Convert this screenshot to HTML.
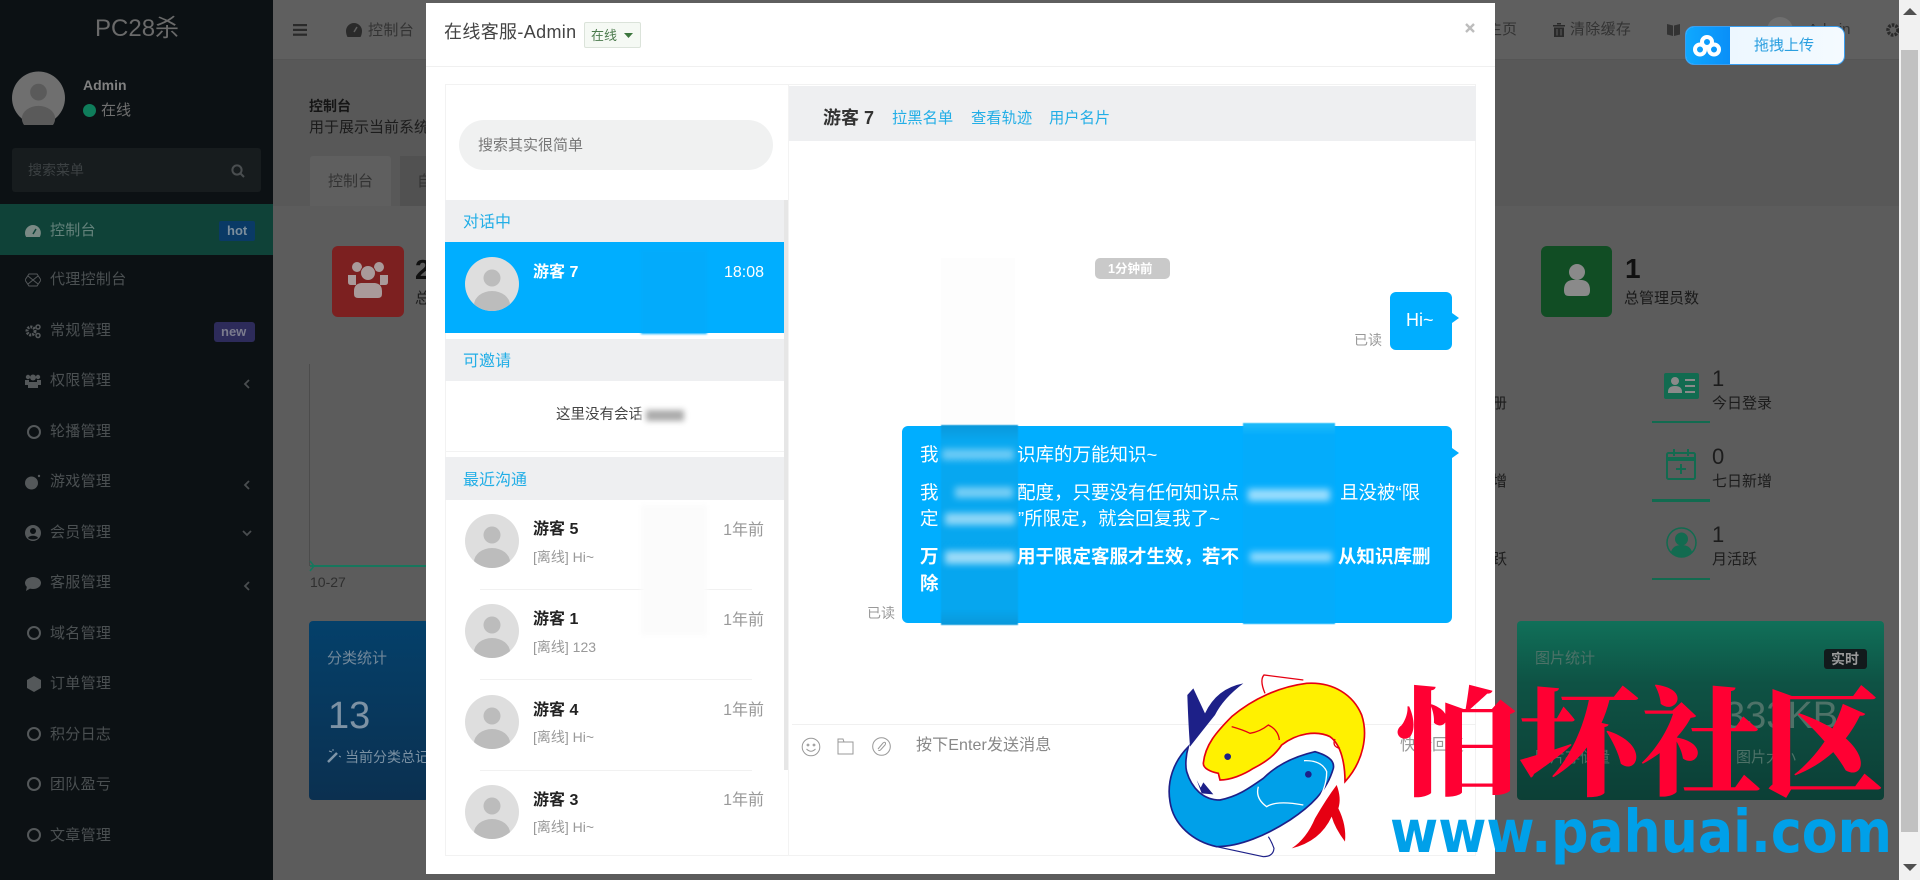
<!DOCTYPE html>
<html lang="zh">
<head>
<meta charset="utf-8">
<title>在线客服</title>
<style>
html,body{margin:0;padding:0;width:1920px;height:880px;overflow:hidden;background:#5c5c5c;font-family:"Liberation Sans","Noto Sans CJK SC",sans-serif}
.a{position:absolute}
.t{position:absolute;white-space:nowrap;line-height:1}
.m{font-size:15px;color:#4b5052;left:50px;letter-spacing:.3px}
.ic{position:absolute;left:25px;width:16px;height:16px;color:#54585a}
.ring{position:absolute;left:27px;width:14px;height:14px;border:2px solid #54585a;border-radius:50%;box-sizing:border-box}
.sec{position:absolute;left:445px;width:339px;height:42px;background:#eeeff1}
.sect{font-size:16px;color:#22aee6;left:463px}
.nm{font-size:16px;font-weight:bold;color:#222;left:533px}
.sub{font-size:14px;color:#999;left:533px}
.tm{font-size:16px;color:#999;right:1156px}
.ln{position:absolute;left:480px;width:272px;height:1px;background:#f1f1f1}
.wb{font-size:18.5px;color:#fff}
.lk{font-size:15.3px;color:#22aee6;top:111px}
.blob{position:absolute;background:#fff;filter:blur(3.5px)}
.blg{position:absolute;background:#888;filter:blur(3px)}
.strip{position:absolute;filter:blur(.6px)}
.st{font-size:15px;color:#1c1c1c}
.big{font-size:22px;color:#1c1c1c}
.gl{position:absolute;left:1652px;width:58px;height:2px;background:#126b50}
</style>
</head>
<body>
<svg width="0" height="0" style="position:absolute">
<defs>
<symbol id="av" viewBox="0 0 54 54"><clipPath id="cp"><circle cx="27" cy="27" r="27"/></clipPath><g clip-path="url(#cp)"><rect width="54" height="54" fill="#dedede"/><circle cx="27" cy="21" r="8.5" fill="#bcbcbc"/><ellipse cx="27" cy="48" rx="18" ry="14" fill="#bcbcbc"/></g></symbol>
</defs>
</svg>

<!-- sidebar -->
<div class="a" style="left:0;top:0;width:273px;height:880px;background:#0c1114"></div>
<div class="t" style="left:95px;top:17px;font-size:24px;color:#6a6a6a">PC28杀</div>
<svg class="a" style="left:12px;top:71px" width="53" height="54" viewBox="0 0 54 54"><circle cx="27" cy="27" r="27" fill="#6f6f6f"/><circle cx="27" cy="21" r="8.5" fill="#5a5a5a"/><ellipse cx="27" cy="48" rx="17" ry="13" fill="#5a5a5a"/></svg>
<div class="t" style="left:83px;top:78px;font-size:14px;font-weight:bold;color:#808080">Admin</div>
<div class="a" style="left:83px;top:104px;width:13px;height:13px;border-radius:50%;background:#0f7d5b"></div>
<div class="t" style="left:101px;top:103px;font-size:15px;color:#6f6f6f">在线</div>
<div class="a" style="left:12px;top:148px;width:249px;height:44px;background:#171c1e;border-radius:3px"></div>
<div class="t" style="left:28px;top:163px;font-size:14px;color:#3c4143">搜索菜单</div>
<svg class="a" style="left:231px;top:164px" width="14" height="14" viewBox="0 0 14 14" fill="none" stroke="#4a4e50" stroke-width="2"><circle cx="6" cy="6" r="4.6"/><path d="M9.5 9.5L13 13"/></svg>

<div class="a" style="left:0;top:204px;width:273px;height:51px;background:#0f4238"></div>
<svg class="ic" style="top:223px;color:#7a8a85" viewBox="0 0 16 16"><path fill="currentColor" d="M8 2a8 8 0 0 0-8 8c0 1.600.4 3 1.200 4h13.600A8 8 0 0 0 8 2z"/><path stroke="#0f4238" stroke-width="1.500" d="M8 11l3-5"/></svg>
<div class="t m" style="top:223px;color:#64827b">控制台</div>
<div class="a" style="left:219px;top:221px;width:36px;height:20px;background:#0a3a66;border-radius:2px"></div>
<div class="t" style="left:227px;top:224px;font-size:13px;font-weight:bold;color:#7c8e9c">hot</div>

<svg class="ic" style="top:272px" viewBox="0 0 16 16" fill="none" stroke="currentColor"><path d="M4 2h8l4 6-4 6H4L0 8z"/><path d="M3 4l10 8M13 4L3 12"/></svg>
<div class="t m" style="top:272px">代理控制台</div>
<svg class="ic" style="top:323px" viewBox="0 0 16 16"><circle cx="6" cy="8" r="4" fill="none" stroke="currentColor" stroke-width="3" stroke-dasharray="2 1"/><circle cx="13" cy="4" r="2" fill="none" stroke="currentColor" stroke-width="1.500"/><circle cx="13" cy="12.500" r="2" fill="none" stroke="currentColor" stroke-width="1.500"/></svg>
<div class="t m" style="top:323px">常规管理</div>
<div class="a" style="left:214px;top:322px;width:41px;height:20px;background:#2d2b5a;border-radius:3px"></div>
<div class="t" style="left:221px;top:325px;font-size:13px;font-weight:bold;color:#7b7b8d">new</div>
<svg class="ic" style="top:373px" viewBox="0 0 16 16" fill="currentColor"><circle cx="3" cy="4" r="2.200"/><circle cx="13" cy="4" r="2.200"/><circle cx="8" cy="4.500" r="3"/><path d="M0 7h4v2h8V7h4v5h-3v3H3v-3H0z"/></svg>
<div class="t m" style="top:373px">权限管理</div>
<div class="ring" style="top:425px"></div><div class="t m" style="top:424px">轮播管理</div>
<svg class="ic" style="top:474px" viewBox="0 0 16 16" fill="currentColor"><circle cx="6.500" cy="9" r="6.500"/><circle cx="14" cy="2" r="1.200"/></svg>
<div class="t m" style="top:474px">游戏管理</div>
<svg class="ic" style="top:525px" viewBox="0 0 16 16"><circle cx="8" cy="8" r="8" fill="currentColor"/><circle cx="8" cy="6" r="3" fill="#0c1114"/><path d="M3 13c1-3 9-3 10 0-2 2-8 2-10 0z" fill="#0c1114"/></svg>
<div class="t m" style="top:525px">会员管理</div>
<svg class="ic" style="top:576px" viewBox="0 0 16 16" fill="currentColor"><ellipse cx="8" cy="7" rx="8" ry="6"/><path d="M2 10l-1 5 5-3z"/></svg>
<div class="t m" style="top:575px">客服管理</div>
<div class="ring" style="top:626px"></div><div class="t m" style="top:626px">域名管理</div>
<svg class="ic" style="top:676px;left:26px" viewBox="0 0 16 16" fill="currentColor"><path d="M8 0l7 4v8l-7 4-7-4V4z"/></svg>
<div class="t m" style="top:676px">订单管理</div>
<div class="ring" style="top:727px"></div><div class="t m" style="top:727px">积分日志</div>
<div class="ring" style="top:777px"></div><div class="t m" style="top:777px">团队盈亏</div>
<div class="ring" style="top:828px"></div><div class="t m" style="top:828px">文章管理</div>
<svg class="a" style="left:243px;top:378px" width="8" height="12" viewBox="0 0 8 12" fill="none" stroke="#4a4e50" stroke-width="1.800"><path d="M6 2L2 6l4 4"/></svg>
<svg class="a" style="left:243px;top:479px" width="8" height="12" viewBox="0 0 8 12" fill="none" stroke="#4a4e50" stroke-width="1.800"><path d="M6 2L2 6l4 4"/></svg>
<svg class="a" style="left:241px;top:529px" width="12" height="8" viewBox="0 0 12 8" fill="none" stroke="#4a4e50" stroke-width="1.800"><path d="M2 2l4 4 4-4"/></svg>
<svg class="a" style="left:243px;top:580px" width="8" height="12" viewBox="0 0 8 12" fill="none" stroke="#4a4e50" stroke-width="1.800"><path d="M6 2L2 6l4 4"/></svg>

<!-- main dim background -->
<div class="a" style="left:273px;top:0;width:1626px;height:59px;background:#5f5f5f;border-bottom:1px solid #555"></div>
<div class="a" style="left:273px;top:60px;width:1626px;height:146px;background:#585858"></div>
<div class="a" style="left:310px;top:156px;width:81px;height:50px;background:#5f5f5f;border-radius:3px 3px 0 0"></div>
<div class="a" style="left:400px;top:156px;width:30px;height:50px;background:#515151"></div>
<svg class="a" style="left:293px;top:24px" width="14" height="12" viewBox="0 0 14 12" fill="#2a2a2a"><rect width="14" height="2.200"/><rect y="4.800" width="14" height="2.200"/><rect y="9.600" width="14" height="2.200"/></svg>
<svg class="a" style="left:346px;top:23px" width="16" height="14" viewBox="0 0 16 14"><path fill="#2a2a2a" d="M8 0a8 8 0 0 0-8 8c0 2 .6 4.500 1.500 6h13c.9-1.500 1.500-4 1.500-6a8 8 0 0 0-8-8z"/><path stroke="#5f5f5f" stroke-width="1.500" d="M8 9l3-5"/></svg>
<div class="t" style="left:368px;top:23px;font-size:15px;color:#333;letter-spacing:.4px">控制台</div>
<div class="t" style="left:309px;top:99px;font-size:14px;font-weight:bold;color:#151515">控制台</div>
<div class="t" style="left:309px;top:120px;font-size:15px;color:#1c1c1c">用于展示当前系统</div>
<div class="t" style="left:328px;top:174px;font-size:15px;color:#333">控制台</div>
<div class="t" style="left:417px;top:174px;font-size:15px;color:#333">自</div>
<div class="a" style="left:332px;top:246px;width:72px;height:71px;background:#7c2020;border-radius:6px"></div>
<svg class="a" style="left:348px;top:261px" width="40" height="38" viewBox="0 0 40 38" fill="#a99a9a"><circle cx="9" cy="6" r="5"/><circle cx="31" cy="6" r="5"/><path d="M0 14h8v10H3q-3 0-3-3zM32 14h8v7q0 3-3 3h-5z"/><circle cx="20" cy="12" r="7.500" stroke="#7c2020"/><path d="M6 30q0-7 7-8h14q7 1 7 8v3q0 4-4 4H10q-4 0-4-4z"/></svg>
<div class="t" style="left:415px;top:256px;font-size:28px;font-weight:bold;color:#111">2</div>
<div class="t" style="left:415px;top:291px;font-size:15px;color:#1c1c1c">总</div>
<div class="a" style="left:309px;top:364px;width:1px;height:202px;background:#4c4c4c"></div>
<div class="a" style="left:310px;top:565px;width:116px;height:2px;background:#17775d"></div>
<svg class="a" style="left:309px;top:560px" width="8" height="12" viewBox="0 0 8 12" fill="none" stroke="#17775d" stroke-width="1.500"><path d="M1 1l4 5-4 5"/></svg>
<div class="t" style="left:310px;top:575px;font-size:14px;color:#2f2f2f">10-27</div>
<div class="a" style="left:309px;top:621px;width:120px;height:179px;background:linear-gradient(#04406a,#0b3050);border-radius:4px"></div>
<div class="t" style="left:327px;top:651px;font-size:15px;color:#72889a">分类统计</div>
<div class="t" style="left:328px;top:697px;font-size:38px;color:#7d92a4">13</div>
<svg class="a" style="left:327px;top:749px" width="14" height="14" viewBox="0 0 14 14" fill="none" stroke="#8096a8" stroke-width="2.500"><path d="M1 13l9-9"/><path stroke-width="1" d="M2 2l3 1M6 0v2M12 7l2 1"/></svg>
<div class="t" style="left:345px;top:750px;font-size:14px;color:#7b91a3">当前分类总记录</div>

<!-- right side content behind -->
<div class="t" style="left:1487px;top:22px;font-size:15px;color:#333">主页</div>
<svg class="a" style="left:1553px;top:23px" width="12" height="14" viewBox="0 0 12 14" fill="#2a2a2a"><path d="M0 2h12v1.500H0zM4 0h4v1.500H4zM1 4.500h10V14H1z"/><path fill="#5f5f5f" d="M3.500 6h1v6.500h-1zM7.500 6h1v6.500h-1z"/></svg>
<div class="t" style="left:1570px;top:22px;font-size:15px;color:#333;letter-spacing:.3px">清除缓存</div>
<svg class="a" style="left:1667px;top:23px" width="13" height="13" viewBox="0 0 13 13" fill="#333"><path d="M0 1l6 1.500V13L0 11.500zM7 2.500L13 1v10.500L7 13z"/></svg>
<div class="a" style="left:1767px;top:17px;width:26px;height:26px;border-radius:50%;background:#6f6f6f"></div>
<div class="t" style="left:1808px;top:22px;font-size:15px;color:#333">Admin</div>
<svg class="a" style="left:1885px;top:22px" width="14" height="16" viewBox="0 0 14 16"><circle cx="8" cy="8" r="5" fill="none" stroke="#2a2a2a" stroke-width="3.500" stroke-dasharray="2.500 1.200"/></svg>
<div class="a" style="left:1541px;top:246px;width:71px;height:71px;background:#114d24;border-radius:6px"></div>
<svg class="a" style="left:1563px;top:264px" width="28" height="32" viewBox="0 0 28 32" fill="#8a8a8a"><circle cx="14" cy="8" r="8"/><path d="M1 26q0-9 8-10h10q8 1 8 10v1q0 5-5 5H6q-5 0-5-5z"/></svg>
<div class="t" style="left:1625px;top:255px;font-size:28px;font-weight:bold;color:#111">1</div>
<div class="t" style="left:1624px;top:291px;font-size:15px;color:#1a1a1a">总管理员数</div>

<div class="t" style="left:1492px;top:396px;font-size:15px;color:#1c1c1c">册</div>
<div class="t" style="left:1492px;top:474px;font-size:15px;color:#1c1c1c">增</div>
<div class="t" style="left:1492px;top:552px;font-size:15px;color:#1c1c1c">跃</div>
<svg class="a" style="left:1664px;top:373px" width="35" height="27" viewBox="0 0 35 27"><rect width="35" height="26" rx="2" fill="#126b50"/><circle cx="11" cy="8" r="4" fill="#8a8a8a"/><path d="M4 19q0-6 7-6t7 6v1H4z" fill="#8a8a8a"/><path stroke="#8a8a8a" stroke-width="2" d="M21 7h10M21 13h10M21 19h10"/></svg>
<div class="t big" style="left:1712px;top:368px;">1</div>
<div class="t st" style="left:1712px;top:396px">今日登录</div>
<div class="gl" style="top:421px"></div>
<svg class="a" style="left:1666px;top:448px" width="30" height="32" viewBox="0 0 30 32" fill="none" stroke="#126b50" stroke-width="2"><rect x="1" y="5" width="28" height="26" rx="1.500"/><path d="M1 11h28" stroke-width="4"/><path d="M8 1v7M22 1v7M15 16v10M10 21h10"/></svg>
<div class="t big" style="left:1712px;top:446px">0</div>
<div class="t st" style="left:1712px;top:474px">七日新增</div>
<div class="gl" style="top:499px;height:3px"></div>
<svg class="a" style="left:1666px;top:527px" width="31" height="31" viewBox="0 0 31 31"><circle cx="15.500" cy="15.500" r="14.500" fill="none" stroke="#126b50" stroke-width="1.500"/><circle cx="15.500" cy="12" r="6.500" fill="#126b50"/><path d="M5 25q2-7 10.500-7T26 25q-4 4.500-10.500 4.500T5 25z" fill="#126b50"/></svg>
<div class="t big" style="left:1712px;top:524px">1</div>
<div class="t st" style="left:1712px;top:552px">月活跃</div>
<div class="gl" style="top:578px"></div>

<div class="a" style="left:1517px;top:621px;width:367px;height:179px;background:linear-gradient(#107059,#0e5244 35%,#0c3f36);border-radius:4px"></div>
<div class="t" style="left:1535px;top:651px;font-size:15px;color:#4e7268">图片统计</div>
<div class="a" style="left:1824px;top:649px;width:43px;height:20px;background:#121a1c;border-radius:3px"></div>
<div class="t" style="left:1831px;top:652px;font-size:14px;font-weight:bold;color:#9a9a9a">实时</div>
<div class="t" style="left:1724px;top:697px;font-size:38px;color:#4e7268">333KB</div>
<div class="t" style="left:1535px;top:750px;font-size:15px;color:#4e7268">图片存储量</div>
<div class="t" style="left:1736px;top:750px;font-size:15px;color:#4e7268">图片大小</div>

<!-- scrollbar -->
<div class="a" style="left:1899px;top:0;width:21px;height:880px;background:#f1f1f1"></div>
<div class="a" style="left:1901px;top:50px;width:17px;height:782px;background:#c1c1c1"></div>
<svg class="a" style="left:1903px;top:8px" width="14" height="8"><path d="M7 0l7 7H0z" fill="#505050"/></svg>
<svg class="a" style="left:1903px;top:863px" width="14" height="8"><path d="M7 8l7-7H0z" fill="#505050"/></svg>

<!-- modal -->
<div class="a" style="left:426px;top:3px;width:1069px;height:871px;background:#fff"></div>
<div class="a" style="left:426px;top:66px;width:1069px;height:1px;background:#f0f0f0"></div>
<div class="t" style="left:444px;top:23px;font-size:18px;color:#444;letter-spacing:.35px">在线客服-Admin</div>
<div class="a" style="left:584px;top:22px;width:57px;height:26px;box-sizing:border-box;background:#f5f9f4;border:1px solid #dbe3da;border-radius:2px"></div>
<div class="t" style="left:591px;top:29px;font-size:13px;color:#4b7a4c">在线</div>
<svg class="a" style="left:624px;top:33px" width="9" height="5"><path d="M0 0h9L4.500 5z" fill="#3c763d"/></svg>
<svg class="a" style="left:1465px;top:23px" width="10" height="10" viewBox="0 0 10 10" stroke="#bdbdbd" stroke-width="2.400"><path d="M1 1l8 8M9 1l-8 8"/></svg>

<div class="a" style="left:445px;top:84px;width:1031px;height:772px;box-sizing:border-box;border:1px solid #f2f2f2"></div>
<div class="a" style="left:788px;top:85px;width:1px;height:771px;background:#f3f3f3"></div>
<div class="a" style="left:789px;top:86px;width:687px;height:55px;background:#eeeff1"></div>
<div class="a" style="left:459px;top:120px;width:314px;height:50px;border-radius:25px;background:#f0f1f1"></div>
<div class="t" style="left:478px;top:138px;font-size:15px;color:#777">搜索其实很简单</div>

<div class="a" style="left:784px;top:200px;width:4px;height:570px;background:#e6e6e6"></div>
<div class="sec" style="top:200px"></div>
<div class="t sect" style="top:215px">对话中</div>
<div class="a" style="left:445px;top:242px;width:339px;height:91px;background:#00aeff"></div>
<svg class="a" style="left:465px;top:257px" width="54" height="54"><use href="#av"/></svg>
<div class="t nm" style="top:265px;color:#fff">游客 7</div>
<div class="t tm" style="top:265px;color:#fff">18:08</div>
<div class="a" style="left:641px;top:250px;width:66px;height:84px;background:#03abfb;filter:blur(1px)"></div>

<div class="sec" style="top:339px"></div>
<div class="t sect" style="top:354px">可邀请</div>
<div class="t" style="left:556px;top:408px;font-size:14.500px;color:#444">这里没有会话</div>
<div class="a" style="left:641px;top:395px;width:66px;height:50px;background:#fff;filter:blur(2px)"></div>
<div class="blg" style="left:646px;top:410px;width:38px;height:11px;opacity:.7"></div>
<div class="a" style="left:445px;top:451px;width:339px;height:1px;background:#f3f3f3"></div>

<div class="sec" style="top:457px;height:43px"></div>
<div class="t sect" style="top:473px">最近沟通</div>
<svg class="a" style="left:465px;top:514px" width="54" height="54"><use href="#av"/></svg>
<div class="t nm" style="top:522px">游客 5</div>
<div class="t tm" style="top:523px">1年前</div>
<div class="t sub" style="top:550px">[离线] Hi~</div>
<div class="ln" style="top:589px"></div>
<svg class="a" style="left:465px;top:604px" width="54" height="54"><use href="#av"/></svg>
<div class="t nm" style="top:612px">游客 1</div>
<div class="t tm" style="top:613px">1年前</div>
<div class="t sub" style="top:640px">[离线] 123</div>
<div class="ln" style="top:679px"></div>
<svg class="a" style="left:465px;top:695px" width="54" height="54"><use href="#av"/></svg>
<div class="t nm" style="top:703px">游客 4</div>
<div class="t tm" style="top:703px">1年前</div>
<div class="t sub" style="top:730px">[离线] Hi~</div>
<div class="ln" style="top:770px"></div>
<svg class="a" style="left:465px;top:785px" width="54" height="54"><use href="#av"/></svg>
<div class="t nm" style="top:793px">游客 3</div>
<div class="t tm" style="top:793px">1年前</div>
<div class="t sub" style="top:820px">[离线] Hi~</div>
<div class="a" style="left:641px;top:505px;width:66px;height:130px;background:#fbfbfb;filter:blur(2px)"></div>

<div class="t" style="left:823px;top:109px;font-size:18px;font-weight:bold;color:#333">游客 7</div>
<div class="t lk" style="left:892px">拉黑名单</div>
<div class="t lk" style="left:971px">查看轨迹</div>
<div class="t lk" style="left:1049px">用户名片</div>

<div class="a" style="left:941px;top:258px;width:74px;height:168px;background:#fdfdfd"></div>
<div class="a" style="left:1095px;top:258px;width:75px;height:21px;border-radius:5px;background:#c9c9c9"></div>
<div class="t" style="left:1108px;top:263px;font-size:12.500px;font-weight:bold;color:#fff">1分钟前</div>
<div class="a" style="left:1390px;top:292px;width:62px;height:58px;border-radius:6px;background:#00aeff"></div>
<div class="a" style="left:1452px;top:313px;width:0;height:0;border-left:7px solid #00aeff;border-top:5px solid transparent;border-bottom:5px solid transparent"></div>
<div class="t" style="left:1406px;top:311px;font-size:18px;color:#fff">Hi~</div>
<div class="t" style="left:1354px;top:333px;font-size:14px;color:#999">已读</div>

<div class="a" style="left:902px;top:426px;width:550px;height:197px;border-radius:6px;background:#00aeff"></div>
<div class="a" style="left:1452px;top:448px;width:0;height:0;border-left:7px solid #00aeff;border-top:5px solid transparent;border-bottom:5px solid transparent"></div>
<div class="strip" style="left:941px;top:425px;width:77px;height:200px;background:linear-gradient(#0a98da,#08a8f0 8%,#06a6ef 92%,#0a98da)"></div>
<div class="strip" style="left:1243px;top:423px;width:92px;height:201px;background:linear-gradient(#20bcfa,#04acfb 6%,#04acfb)"></div>
<div class="t wb" style="left:920px;top:446px">我</div>
<div class="t wb" style="left:1017px;top:446px">识库的万能知识~</div>
<div class="t wb" style="left:920px;top:484px">我</div>
<div class="t wb" style="left:1017px;top:484px">配度，只要没有任何知识点</div>
<div class="t wb" style="left:1340px;top:484px">且没被“限</div>
<div class="t wb" style="left:920px;top:510px">定</div>
<div class="t wb" style="left:1018px;top:510px">”所限定，就会回复我了~</div>
<div class="t wb" style="left:920px;top:548px;font-weight:bold">万</div>
<div class="t wb" style="left:1017px;top:548px;font-weight:bold">用于限定客服才生效，若不</div>
<div class="t wb" style="left:1338px;top:548px;font-weight:bold">从知识库删</div>
<div class="t wb" style="left:920px;top:575px;font-weight:bold">除</div>
<div class="blob" style="left:942px;top:449px;width:72px;height:11px;opacity:.4"></div>
<div class="blob" style="left:955px;top:487px;width:58px;height:11px;opacity:.45"></div>
<div class="blob" style="left:945px;top:513px;width:70px;height:12px;opacity:.55"></div>
<div class="blob" style="left:945px;top:551px;width:70px;height:13px;opacity:.6"></div>
<div class="blob" style="left:1248px;top:489px;width:82px;height:12px;opacity:.6"></div>
<div class="blob" style="left:1250px;top:552px;width:82px;height:10px;opacity:.55"></div>
<div class="t" style="left:867px;top:606px;font-size:14px;color:#999">已读</div>

<div class="a" style="left:792px;top:724px;width:684px;height:1px;background:#f0f0f0"></div>
<svg class="a" style="left:801px;top:737px" width="20" height="20" viewBox="0 0 20 20" fill="none" stroke="#999" stroke-width="1"><circle cx="10" cy="10" r="8.800"/><path d="M5.500 12q4.500 4.500 9 0"/><circle cx="7" cy="8" r=".9"/><circle cx="13" cy="8" r=".9"/></svg>
<svg class="a" style="left:837px;top:738px" width="17" height="17" viewBox="0 0 17 17" fill="none" stroke="#999" stroke-width="1"><path d="M1 1h5l1 3h9v12H1zM1 4h6"/></svg>
<svg class="a" style="left:872px;top:737px" width="19" height="19" viewBox="0 0 19 19" fill="none" stroke="#999" stroke-width="1"><circle cx="9.500" cy="9.500" r="8.800"/><path d="M6 12l5-6q2-1.500 2.500 0 .3 1-.5 2l-4.500 5q-1.500 1-2 0"/></svg>
<div class="t" style="left:916px;top:738px;font-size:16px;color:#888;letter-spacing:.1px">按下Enter发送消息</div>
<div class="t" style="left:1400px;top:738px;font-size:16px;color:#999">快捷回复</div>

<!-- upload widget -->
<div class="a" style="left:1685px;top:26px;width:160px;height:39px;box-sizing:border-box;border:1px solid #3a9ef0;border-radius:9px;background:linear-gradient(90deg,#eaf6ff,#f4faff);overflow:hidden">
  <div class="a" style="left:0;top:0;width:44px;height:37px;background:linear-gradient(90deg,#0ea8ff,#0a8ff8)"></div>
</div>
<svg class="a" style="left:1693px;top:34px" width="28" height="24" viewBox="0 0 28 24" fill="none" stroke="#fff" stroke-width="4"><circle cx="14" cy="8" r="5"/><circle cx="7" cy="15.500" r="5"/><circle cx="21" cy="15.500" r="5"/></svg>
<div class="t" style="left:1754px;top:38px;font-size:15px;color:#2a9fe0">拖拽上传</div>

<!-- watermark logo -->
<svg class="a" style="left:1160px;top:665px" width="220" height="205" viewBox="0 0 660 615">
  <path d="M430 45L312 30Q298 45 315 85" fill="none" stroke="#e60012" stroke-width="4"/>
  <path d="M130 295C135 240 170 200 215 155C280 100 360 65 440 55C520 50 580 90 605 150C625 210 610 290 555 350C555 300 545 240 510 215C470 195 410 205 365 240C345 270 320 290 280 310C250 330 210 345 180 345L175 325C150 320 130 310 130 295Z" fill="#fff100" stroke="#e60012" stroke-width="5"/>
  <path d="M215 185Q250 195 270 205Q300 200 325 180Q355 195 358 225" fill="none" stroke="#e60012" stroke-width="4"/>
  <circle cx="203" cy="275" r="10" fill="#1d2088"/>
  <path d="M82 90L100 70L135 145Q170 70 250 55Q190 100 165 150Q125 200 90 245Q85 180 82 90Z" fill="#1d2088"/>
  <path d="M85 245C40 290 20 350 30 410C40 480 100 530 170 545C240 545 320 510 390 465C450 425 500 380 520 310C525 285 500 270 465 260C400 275 350 300 310 340C260 375 230 395 180 405C130 405 95 370 80 320C75 300 78 270 85 245Z" fill="#00a0e9" stroke="#1d2088" stroke-width="5"/>
  <path d="M110 345L125 385L160 388L130 352L122 368Z" fill="#1d2088"/>
  <path d="M295 365Q285 400 320 425Q350 405 430 420" fill="none" stroke="#fff" stroke-width="4"/>
  <path d="M432 287Q485 285 500 320Q500 370 470 410" fill="none" stroke="#fff" stroke-width="4"/>
  <circle cx="445" cy="328" r="10" fill="#1d2088"/>
  <path d="M530 360Q545 400 535 430Q560 480 555 530Q525 490 515 455Q480 530 395 550Q440 520 465 460Q500 400 530 360Z" fill="#e60012"/>
  <path d="M525 222Q515 245 540 250" fill="none" stroke="#e60012" stroke-width="4"/>
  <path d="M170 545L310 575Q340 575 342 550Q335 530 325 515" fill="none" stroke="#1d2088" stroke-width="3.500"/>
</svg>
<svg class="a" style="left:0;top:0" width="1920" height="880" viewBox="0 0 1920 880">
  <text x="1396" y="786" font-family="'Noto Serif CJK SC',serif" font-weight="900" font-size="118" fill="#ff0033" textLength="488" lengthAdjust="spacingAndGlyphs">怕坏社区</text>
  <text x="1390" y="852" font-family="'DejaVu Sans','Liberation Sans',sans-serif" font-weight="700" font-size="59" fill="#00a0e9" textLength="502" lengthAdjust="spacingAndGlyphs">www.pahuai.com</text>
</svg>
</body>
</html>
